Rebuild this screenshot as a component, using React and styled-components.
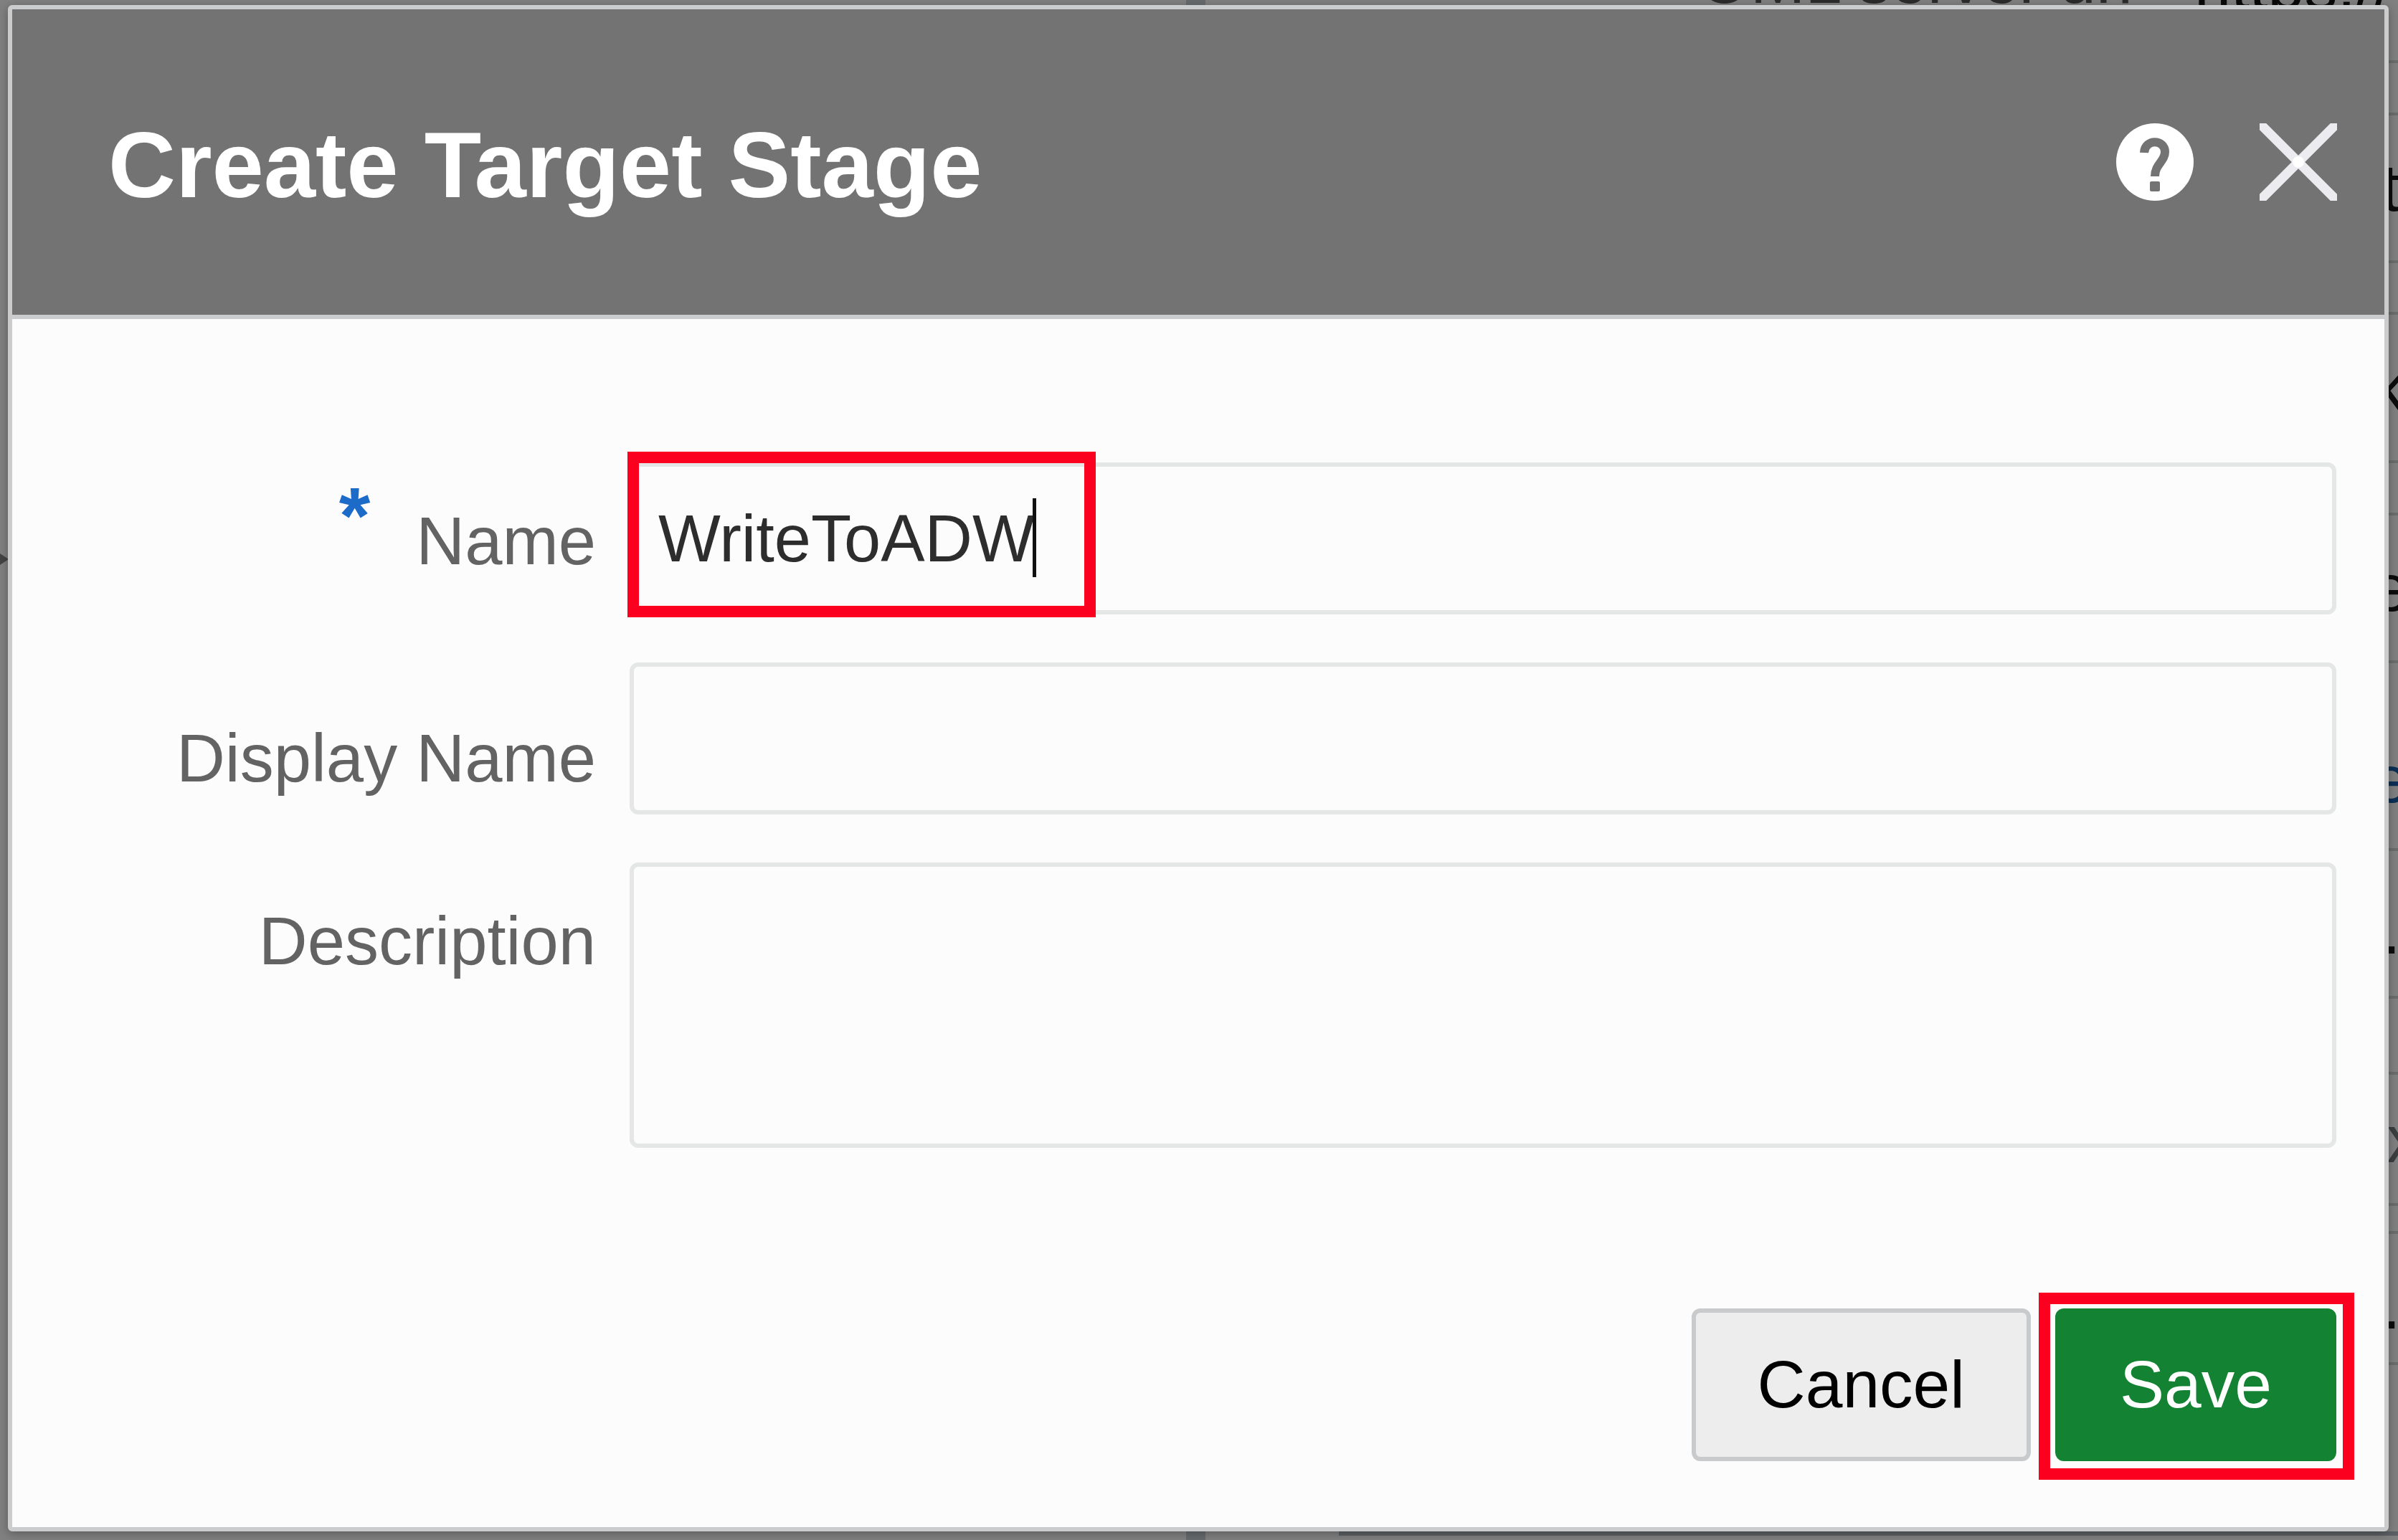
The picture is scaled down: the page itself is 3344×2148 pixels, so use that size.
import React, { useState } from "react";
import styled, { createGlobalStyle } from "styled-components";

const GlobalStyle = createGlobalStyle`
  *, *::before, *::after { box-sizing: border-box; }
  body {
    margin: 0;
    background: #828282;
    font-family: "Liberation Sans", Arial, sans-serif;
  }
`;

const Stage = styled.div`
  position: relative;
  min-height: 100vh;
  display: flex;
  padding: 7px 13px 12px 11px;
  overflow: hidden;
`;

/* Dimmed page that lies under the dialog */
const Backdrop = styled.div`
  position: absolute;
  inset: 0;
  display: flex;
  overflow: hidden;
  background: #808080;
`;

const CanvasPane = styled.div`
  width: 1654px;
  padding-top: 772px;
`;

const Splitter = styled.div`
  width: 27px;
  background: #676b6e;
`;

const DetailPane = styled.div`
  flex: 1;
  display: flex;
  flex-direction: column;
  justify-content: space-between;
`;

const DetailTop = styled.div`
  height: 20px;
  margin-top: -32px;
  display: flex;
  justify-content: flex-end;
  align-items: flex-end;
  gap: 52px;
  font-size: 92px;
  line-height: 32px;
  white-space: nowrap;
  color: #2c2c2c;
`;

const DetailUrl = styled.span`
  width: 318px;
  padding-left: 34px;
  line-height: 16px;
  color: #0a0a0a;
`;

const DetailFoot = styled.div`
  height: 6px;
  margin: 0 0 6px 186px;
  background: #5c6064;
`;

const EdgeColumn = styled.div`
  position: absolute;
  top: 84px;
  right: 0;
  width: 36px;
  overflow: hidden;
`;

const EdgeCell = styled.div`
  height: ${(p) => p.$h}px;
  display: flex;
  align-items: center;
  border-top: 4px solid #6b6d6d;
  padding-top: ${(p) => p.$drop || 0}px;
  padding-left: ${(p) => p.$indent || 0}px;
  font-size: 92px;
  line-height: 100px;
  color: ${(p) => p.$color || "#0c0c0c"};
`;

const Dialog = styled.section`
  position: relative;
  flex: 1;
  display: flex;
  flex-direction: column;
  border: 6px solid #cbcccd;
  border-radius: 6px;
  background: #fcfcfc;
  box-shadow: 0 3px 14px rgba(0, 0, 0, 0.3);
`;

const Header = styled.header`
  display: flex;
  align-items: center;
  justify-content: space-between;
  height: 432px;
  padding: 0 66px 0 134px;
  border-bottom: 6px solid #cbcccd;
  background: #737373;
`;

const Title = styled.h1`
  margin: 0;
  padding-top: 8px;
  font-size: 130px;
  line-height: 150px;
  font-weight: 700;
  color: #fff;
`;

const HeaderActions = styled.div`
  display: flex;
  gap: 92px;
`;

const IconButton = styled.button`
  width: 108px;
  height: 108px;
  padding: 0;
  border: 0;
  background: none;
  svg { display: block; }
`;

const Form = styled.form`
  flex: 1;
  display: flex;
  flex-direction: column;
  justify-content: space-between;
  padding: 200px 67px 92px 0;
`;

const Fields = styled.div`
  display: grid;
  gap: 67px;
`;

const Field = styled.div`
  display: grid;
  grid-template-columns: 814px 1fr;
  column-gap: 47px;
`;

const Label = styled.label`
  display: flex;
  justify-content: flex-end;
  gap: 64px;
  padding-top: ${(p) => (p.$low ? 80 : 56)}px;
  font-size: 94px;
  line-height: 108px;
  color: #636363;
`;

const Required = styled.span`
  font-size: 112px;
  line-height: 38px;
  font-weight: 700;
  color: #1c6bc9;
`;

const Control = styled.div`
  position: relative;
  display: grid;
`;

const TextInput = styled.input`
  width: 100%;
  height: ${(p) => (p.as === "textarea" ? 398 : 212)}px;
  margin: 0;
  padding: 0 34px;
  border: 6px solid #e4e7e6;
  border-radius: 12px;
  outline: none;
  resize: none;
  background: #fcfcfc;
  font-family: inherit;
  font-size: 92px;
  color: #2d2d2d;
`;

const Caret = styled.span`
  position: absolute;
  left: 562px;
  top: 50px;
  width: 5px;
  height: 110px;
  background: #111;
`;

const Highlight = styled.span`
  position: absolute;
  inset: ${(p) => p.$inset};
  width: ${(p) => p.$width || "auto"};
  border: 16px solid #fc001f;
  pointer-events: none;
`;

const Footer = styled.footer`
  display: flex;
  justify-content: flex-end;
  gap: 34px;
`;

const Button = styled.button`
  height: 213px;
  padding: 0 ${(p) => (p.$primary ? 84 : 86)}px;
  border: 6px solid ${(p) => (p.$primary ? "#138333" : "#c8cacb")};
  border-radius: 12px;
  background: ${(p) => (p.$primary ? "#138333" : "#ededed")};
  font-family: inherit;
  font-size: 93px;
  color: ${(p) => (p.$primary ? "#fff" : "#000")};
`;

const HelpIcon = () => (
  <svg width="108" height="108" viewBox="0 0 108 108" fill="none" aria-hidden="true">
    <circle cx="54" cy="54" r="54" fill="#fff" />
    <path d="M39 41C40 21 68 22 68 40C68 53 54 57 54 74" stroke="#737373" strokeWidth="12" />
    <rect x="47" y="81" width="14" height="14" rx="2" fill="#737373" />
  </svg>
);

const CloseIcon = () => (
  <svg width="108" height="108" viewBox="0 0 108 108" fill="none" aria-hidden="true">
    <path d="M0 0L108 108M108 0L0 108" stroke="#ececf0" strokeWidth="13" />
    <circle cx="54" cy="54" r="8" fill="#fff" />
  </svg>
);

const ArrowTip = () => (
  <svg width="12" height="16" viewBox="0 0 12 16" aria-hidden="true">
    <path d="M0 0L12 8L0 16Z" fill="#444" />
  </svg>
);

const edgeCells = [
  { h: 73 },
  { h: 206, text: "t", indent: 13 },
  { h: 72 },
  { h: 207, text: "k" },
  { h: 73 },
  { h: 206, text: "e" },
  { h: 262, text: "e", color: "#0b2f55", drop: 66 },
  { h: 206, text: ".", indent: 14, drop: 20 },
  { h: 106 },
  { h: 183, text: "x", color: "#3c3f40", indent: 20 },
  { h: 39 },
  { h: 183, text: ".", indent: 14, drop: 20 },
  { h: 100 },
];

export default function App() {
  const [name, setName] = useState("WriteToADW");
  return (
    <>
      <GlobalStyle />
      <Stage>
        <Backdrop aria-hidden="true">
          <CanvasPane><ArrowTip /></CanvasPane>
          <Splitter />
          <DetailPane>
            <DetailTop>
              <span>OML server url</span>
              <DetailUrl>https://</DetailUrl>
            </DetailTop>
            <DetailFoot />
          </DetailPane>
          <EdgeColumn>
            {edgeCells.map((c, i) => (
              <EdgeCell key={i} $h={c.h} $indent={c.indent} $drop={c.drop} $color={c.color}>{c.text}</EdgeCell>
            ))}
          </EdgeColumn>
        </Backdrop>
        <Dialog role="dialog" aria-labelledby="dialog-title">
          <Header>
            <Title id="dialog-title">Create Target Stage</Title>
            <HeaderActions>
              <IconButton type="button" aria-label="Help"><HelpIcon /></IconButton>
              <IconButton type="button" aria-label="Close"><CloseIcon /></IconButton>
            </HeaderActions>
          </Header>
          <Form onSubmit={(e) => e.preventDefault()}>
            <Fields>
              <Field>
                <Label htmlFor="name"><Required>*</Required>Name</Label>
                <Control>
                  <TextInput id="name" required spellCheck={false} value={name} onChange={(e) => setName(e.target.value)} />
                  <Caret />
                  <Highlight $inset="-15px auto -4px -3px" $width="653px" />
                </Control>
              </Field>
              <Field>
                <Label htmlFor="display-name" $low>Display Name</Label>
                <Control><TextInput id="display-name" /></Control>
              </Field>
              <Field>
                <Label htmlFor="description">Description</Label>
                <Control><TextInput as="textarea" id="description" /></Control>
              </Field>
            </Fields>
            <Footer>
              <Button type="button">Cancel</Button>
              <Control>
                <Button type="submit" $primary>Save</Button>
                <Highlight $inset="-22px -25px -26px -23px" />
              </Control>
            </Footer>
          </Form>
        </Dialog>
      </Stage>
    </>
  );
}
